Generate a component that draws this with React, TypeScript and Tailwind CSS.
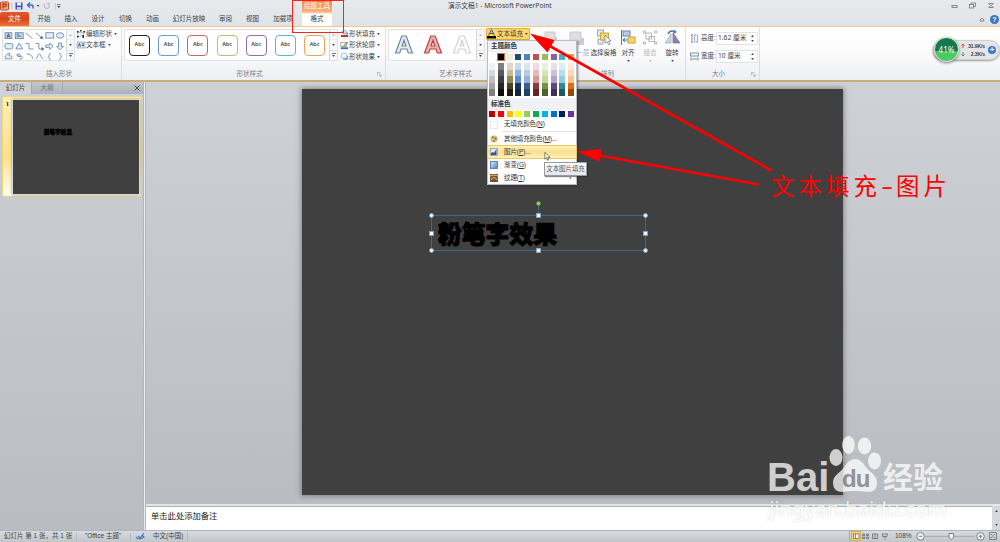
import React from "react";

const Caret = ({ c = "" }: { c?: string }) => (
  <svg viewBox="0 0 4 3" className={"h-[2px] w-[3px] shrink-0 " + c}>
    <path d="M0 0h4L2 3z" fill="#444" />
  </svg>
);

const Tab = ({ t, c }: { t: string; c: string }) => (
  <div className={"flex shrink-0 items-center justify-center pt-px " + c}>{t}</div>
);

const Scroll = () => (
  <div className="flex w-[8px] shrink-0 flex-col border-l border-[#d5d9de] bg-[#f7f8f9]">
    <div className="flex flex-1 items-center justify-center border-b border-[#dfe2e6] opacity-40"><Caret c="rotate-180" /></div>
    <div className="flex flex-1 items-center justify-center border-b border-[#dfe2e6]"><Caret /></div>
    <div className="flex flex-1 flex-col items-center justify-center gap-px"><div className="h-px w-[4px] bg-[#777]" /><Caret /></div>
  </div>
);

const Launcher = () => (
  <svg viewBox="0 0 6 6" className="h-[5px] w-[5px]" fill="none" stroke="#9a9fa6" strokeWidth=".8">
    <path d="M.5 4V.5H4M2 2l3 3M5 2.700V5H2.700" />
  </svg>
);

const Group = ({ w, label, children, launch, end = true }: { w: string; label: string; children: React.ReactNode; launch?: boolean; end?: boolean }) => (
  <div className={"flex h-full shrink-0 flex-col " + w + (end ? " border-r border-[#f3dcae]" : "")}>
    <div className="flex h-[40px]">{children}</div>
    <div className="flex h-[13px] items-center pt-px pr-[3px] text-[#777d85]">
      <span className="flex-1 text-center">{label}</span>
      {launch && <Launcher />}
    </div>
  </div>
);

const shapeStroke = { fill: "none", stroke: "#5c7fa8", strokeWidth: 0.8 };
const Shapes = () => (
  <svg viewBox="0 0 64 31" className="h-[31px] w-[64px]" {...shapeStroke}>
    <g fill="#e3edf8">
      <rect x="2" y="2.500" width="7" height="6" fill="#c5d5e8" />
      <rect x="12.500" y="2.500" width="8" height="6" fill="#c5d5e8" />
      <rect x="43.500" y="2.500" width="8" height="5.500" />
      <ellipse cx="58" cy="5.300" rx="3.800" ry="2.800" />
      <rect x="2" y="13.500" width="8" height="5.500" rx="1.500" />
      <path d="M16.500 13l3.500 6h-7z" />
      <path d="M43.500 15h4v-2l3.500 3.300-3.500 3.300v-2h-4z" />
      <path d="M56.500 13h3v3.500h2l-3.500 3.300-3.500-3.300h2z" />
      <path d="M3 25.500q1-2.500 4-2l-1 2.500q4-.5 3 3H2.500q-1-2 .5-3.500z" />
    </g>
    <path d="M4 7.500l1.500-4L7 7.500M4.500 6h2" stroke="#29415e" />
    <path d="M14 4h2M14 6h4" stroke="#29415e" />
    <path d="M23 2.500l7 6M33.500 2.500l6 5.500M23 13.500h3.500V19H31M33 13.500h3.500V19h4M15 23.500q-2 3 1 3t1-2q-2-1-2 1t4 1q2 1 0 2.500t-1-1M24 24c4 0 6 2 6 5M33 29c3-1 2-5 4-5s1 5 4 5M48.500 23.500c-3 0-.5 3-2.500 3 2 0-.5 3.500 2.500 3.500M57 23.500c3 0 .5 3 2.500 3-2 0 .5 3.500-2.500 3.500" />
    <path d="M40.500 8.500l-3-.5 2-2zM41.500 19l-2-1.500v3z" fill="#38587e" />
  </svg>
);

const styles = ["border-[#222]", "border-[#6d9bd1]", "border-[#cf6262]", "border-[#a9c76b]", "border-[#8b6fb0]", "border-[#5cb8cb]", "border-[#f5a15c]"];

const Glyph = ({ fill, stroke }: { fill: string; stroke: string }) => (
  <svg viewBox="0 0 20 20" className="h-[20px] w-[20px]">
    <path fillRule="evenodd" d="M7.800 1h4.400l6.300 17h-4.200l-1.300-4H7l-1.300 4H1.500zM10 5.300L8.100 11h3.800z" fill={fill} stroke={stroke} strokeWidth="1.200" />
  </svg>
);

const EditIcon = () => (
  <svg viewBox="0 0 10 8" className="h-[8px] w-[10px]"><path d="M1.500 1.500l3 1.500 3.500-1.500-1 4-5 1z" fill="none" stroke="#5f7fa6" strokeWidth=".6" /><path d="M1 1h1.600v1.600H1zM4 0h1.500v1.500H4zM7.500 1H9v1.500H7.500zM1 6h1.500v1.500H1zM6.500 5H8v3H6.500z" fill="#222" /></svg>
);
const TextboxIcon = () => (
  <svg viewBox="0 0 10 8" className="h-[8px] w-[10px]"><rect x="1" y="1" width="8" height="6" fill="#d6e1ef" stroke="#8aa0bb" strokeWidth=".7" /><path d="M2.500 5.500l1-3 1 3M6 3h2M6 4.500h2" fill="none" stroke="#203a5d" strokeWidth=".8" /></svg>
);
const FillIcon = () => (
  <svg viewBox="0 0 10 9" className="h-[9px] w-[9px]"><path d="M1.500 3L5 .5 8 3.500 4.500 5.500z" fill="#dce6f3" stroke="#496998" strokeWidth=".7" /><path d="M8 3l1 2.500H7z" fill="#2c66b6" /><rect x="1" y="6.200" width="8" height="2.300" fill="#c23334" /></svg>
);
const PenIcon = () => (
  <svg viewBox="0 0 10 9" className="h-[9px] w-[9px]"><rect x="1" y="1" width="6.500" height="4.500" fill="#fff" stroke="#777" strokeWidth=".7" /><path d="M8.800.8L4 5" stroke="#c3862e" strokeWidth="1.400" /><rect x="1" y="6.500" width="8" height="2" fill="#386fb8" /></svg>
);
const EffectIcon = () => (
  <svg viewBox="0 0 10 9" className="h-[9px] w-[9px]"><rect x="3" y="3" width="6" height="5.500" rx="2" fill="#7e9dc9" /><rect x="1.500" y="1" width="6" height="5.500" rx="1.500" fill="#f1f6fc" stroke="#88a5cf" strokeWidth=".7" /></svg>
);

const Row = ({ icon, t }: { icon: React.ReactNode; t: string }) => (
  <div className="flex h-[11.500px] items-center">{icon}<span>{t}</span><Caret c="ml-[2px]" /></div>
);

const Big = ({ icon, t, w, dim, caret = true }: { icon: React.ReactNode; t: string; w: string; dim?: boolean; caret?: boolean }) => (
  <div className={"flex shrink-0 flex-col items-center whitespace-nowrap " + w + (dim ? " text-[#b0b3b8]" : "")}>
    <div className="flex h-[19px] items-end">{icon}</div>
    <span className="mt-[2px] leading-[10px]">{t}</span>
    {caret && <Caret c={"mt-[2px]" + (dim ? " opacity-30" : "")} />}
  </div>
);

const SizeRow = ({ t, v, r }: { t: string; v: string; r?: boolean }) => (
  <div className="flex h-[13px] items-center">
    {r ? (
      <svg viewBox="0 0 9 9" className="mr-[2px] h-[9px] w-[9px]" fill="none" stroke="#5e789c" strokeWidth=".8"><rect x=".5" y="1" width="8" height="3" /><path d="M1 5.500v3M8 5.500v3M1.500 7h6" /></svg>
    ) : (
      <svg viewBox="0 0 9 9" className="mr-[2px] h-[9px] w-[9px]" fill="none" stroke="#5e789c" strokeWidth=".8"><path d="M1 .8h2M1 8.200h2M2 1v7" /><rect x="4.500" y="1" width="3" height="7" strokeDasharray="1.500 .6" /></svg>
    )}
    <span className="w-[15px]">{t}</span>
    <div className="flex h-[13px] w-[42px] items-center border border-[#e0e3e7] bg-white pl-px font-['Noto_Sans','Noto_Sans_CJK_SC',sans-serif] text-[6.700px] whitespace-pre">
      <span className="flex-1">{v}</span>
      <span className="mr-[3px] flex flex-col gap-[3px]"><Caret c="rotate-180" /><Caret /></span>
    </div>
  </div>
);

const theme = ["bg-white", "bg-black outline outline-[#e46e38]", "bg-[#eeece1]", "bg-[#1f497d]", "bg-[#4f81bd]", "bg-[#c0504d]", "bg-[#9bbb59]", "bg-[#8064a2]", "bg-[#4bacc6]", "bg-[#f79646]"];
const tints = [
  ["bg-[#f2f2f2]", "bg-[#d8d8d8]", "bg-[#bfbfbf]", "bg-[#a5a5a5]", "bg-[#7f7f7f]"],
  ["bg-[#7f7f7f]", "bg-[#595959]", "bg-[#3f3f3f]", "bg-[#262626]", "bg-[#0c0c0c]"],
  ["bg-[#ddd9c3]", "bg-[#c4bd97]", "bg-[#938953]", "bg-[#494429]", "bg-[#1d1b10]"],
  ["bg-[#c6d9f0]", "bg-[#8db3e2]", "bg-[#548dd4]", "bg-[#17365d]", "bg-[#0f243e]"],
  ["bg-[#dbe5f1]", "bg-[#b8cce4]", "bg-[#95b3d7]", "bg-[#366092]", "bg-[#244061]"],
  ["bg-[#f2dcdb]", "bg-[#e5b9b7]", "bg-[#d99694]", "bg-[#953734]", "bg-[#632423]"],
  ["bg-[#ebf1dd]", "bg-[#d7e3bc]", "bg-[#c3d69b]", "bg-[#76923c]", "bg-[#4f6128]"],
  ["bg-[#e5e0ec]", "bg-[#ccc1d9]", "bg-[#b2a2c7]", "bg-[#5f497a]", "bg-[#3f3151]"],
  ["bg-[#dbeef3]", "bg-[#b7dde8]", "bg-[#92cddc]", "bg-[#31859b]", "bg-[#205867]"],
  ["bg-[#fdeada]", "bg-[#fbd5b5]", "bg-[#fac08f]", "bg-[#e36c09]", "bg-[#974806]"],
];
const standard = ["bg-[#c00000]", "bg-[#ff0000]", "bg-[#ffc000]", "bg-[#ffff00]", "bg-[#92d050]", "bg-[#00b050]", "bg-[#00b0f0]", "bg-[#0070c0]", "bg-[#002060]", "bg-[#7030a0]"];

const MenuItem = ({ t, k, dots = "", icon, c = "", arrow }: { t: string; k: string; dots?: string; icon: React.ReactNode; c?: string; arrow?: boolean }) => (
  <div className={"flex h-[13.200px] shrink-0 items-center " + c}>
    <div className="flex w-[12px] justify-center">{icon}</div>
    <span className="ml-[4px] flex-1 tracking-[-0.1px]">{t}(<u>{k}</u>){dots}</span>
    {arrow && <Caret c="mr-[4px] -rotate-90" />}
  </div>
);

const FillMenu = () => (
  <div className="absolute top-[40px] left-[487px] flex h-[145px] w-[90px] flex-col border border-[#b9bec5] bg-white text-[#333] shadow-[1px_1px_2px_#2228]">
    <div className="flex h-[11px] shrink-0 items-center bg-[#f0f2f5] pl-[3px] font-bold">主题颜色</div>
    <div className="flex h-[9px] shrink-0 items-center gap-[2.800px] pl-px">
      {theme.map((c) => <i key={c} className={"h-[6px] w-[6px] shrink-0 " + c} />)}
    </div>
    <div className="mt-[2px] flex shrink-0 gap-[2.800px] pl-px">
      {tints.map((col, i) => <div key={i} className="flex w-[6px] shrink-0 flex-col">{col.map((c) => <i key={c} className={"h-[6.600px] " + c} />)}</div>)}
    </div>
    <div className="mt-[2px] flex h-[12px] shrink-0 items-center bg-[#f0f2f5] pl-[3px] font-bold">标准色</div>
    <div className="flex h-[8px] shrink-0 items-center gap-[2.800px] pl-px">
      {standard.map((c) => <i key={c} className={"h-[6px] w-[6px] shrink-0 " + c} />)}
    </div>
    <MenuItem t="无填充颜色" k="N" icon={<i className="h-[8px] w-[8px] border border-[#e8e8e8] bg-white" />} />
    <div className="ml-[14px] h-px shrink-0 bg-[#e5e5e5]" />
    <MenuItem t="其他填充颜色" k="M" dots="..." icon={<svg viewBox="0 0 8 8" className="h-[8px] w-[8px]"><circle cx="4" cy="4" r="3.200" fill="#f2cf6c" stroke="#b48b38" strokeWidth=".5" /><circle cx="3" cy="2.500" r=".9" fill="#3b72c0" /><circle cx="5.500" cy="3.500" r=".9" fill="#d33" /><circle cx="4" cy="5.700" r=".9" fill="#3b9147" /></svg>} />
    <MenuItem t="图片" k="P" dots="..." c="-mx-px rounded-[1px] border border-[#ecc766] bg-linear-to-b from-[#fff0b5] via-[#ffe08a] to-[#fff0bd]" icon={<svg viewBox="0 0 8 8" className="h-[8px] w-[8px]"><rect x=".5" y=".5" width="7" height="7" fill="#dce8f6" stroke="#7187a5" strokeWidth=".6" /><path d="M1 7V5l2-1 1 1 2.500-4V7z" fill="#34588e" /></svg>} />
    <MenuItem t="渐变" k="G" icon={<i className="h-[8px] w-[8px] border border-[#6383ae] bg-linear-to-br from-[#d7e7fa] to-[#5684c2]" />} arrow />
    <MenuItem t="纹理" k="T" icon={<svg viewBox="0 0 8 8" className="h-[8px] w-[8px]"><rect width="8" height="8" fill="#77502c" /><path d="M0 2q4-2 8 0M1 6q3-5 6 0" fill="none" stroke="#e8c180" /></svg>} arrow />
  </div>
);

const Handle = ({ c }: { c: string }) => <i className={"absolute h-[5px] w-[5px] border-[0.500px] border-[#80a2bd] bg-[#eefaff] " + c} />;

export default function App() {
  return (
    <div className="relative flex h-[542px] w-[1000px] flex-col overflow-hidden bg-[#c6cacf] font-['Liberation_Sans','Noto_Sans_CJK_SC',sans-serif] text-[6.500px] leading-none whitespace-nowrap text-[#3d4147]">
      <header className="flex h-[26px] shrink-0 bg-linear-to-b from-[#e8eaed] to-[#dfe3e7]">
        <div className="flex w-[302px] shrink-0 flex-col">
          <div className="flex h-[12px] items-center">
            <svg viewBox="0 0 66 12" className="h-[12px] w-[66px]">
              <rect x=".5" y="2" width="8" height="8" rx="1" fill="#f3b294" stroke="#c4461f" />
              <path d="M3 8.500V4h2q1.500 0 1.500 1.300T5 6.600H3" fill="none" stroke="#b93310" strokeWidth="1.300" />
              <path d="M12 3v6M55.500 3v6" stroke="#b5b9bf" strokeWidth=".7" />
              <rect x="15.500" y="2.500" width="7" height="7" fill="#4c53b5" /><rect x="17" y="2.500" width="4" height="3" fill="#f1f4fb" /><rect x="17" y="7" width="4" height="2.500" fill="#cdd3ef" />
              <path d="M28.500 5h3q2 0 1.500 3.500M30 2.500L27.500 5 30 7.500" fill="none" stroke="#3d70c9" strokeWidth="1.500" />
              <path d="M36.500 5h3L38 6.700zM57 6h3.500l-1.700 2z" fill="#444" /><path d="M57 4.500h3.500" stroke="#555" strokeWidth=".8" />
              <path d="M45 4a2.500 2.500 0 1 0 3.500 0M46.500 3.200h2.500v2" fill="none" stroke="#b5b8bc" strokeWidth="1.100" />
            </svg>
          </div>
          <div className="flex h-[14px]">
            <div className="flex w-[29px] items-center justify-center rounded-t-[2px] bg-linear-to-b from-[#e4572e] via-[#d9441b] to-[#f0703a] text-white">文件</div>
            <Tab t="开始" c="w-[30px]" /><Tab t="插入" c="w-[24px]" /><Tab t="设计" c="w-[30px]" /><Tab t="切换" c="w-[25px]" /><Tab t="动画" c="w-[29px]" /><Tab t="幻灯片放映" c="w-[44px]" /><Tab t="审阅" c="w-[29px]" /><Tab t="视图" c="w-[25px]" /><Tab t="加载项" c="w-[36px]" />
          </div>
        </div>
        <div className="flex w-[30px] shrink-0 flex-col items-center bg-linear-to-b from-[#ee8845] from-0% via-[#f7b27c] via-45% to-white to-55%">
          <span className="flex h-[12px] items-center text-white">绘图工具</span>
          <span className="flex h-[14px] items-center pt-px">格式</span>
        </div>
        <div className="flex flex-1 flex-col">
          <div className="flex h-[12px] items-center pl-[116px]">
            <span className="w-[492px] font-['Noto_Sans','Noto_Sans_CJK_SC',sans-serif] text-[6.700px]">演示文稿1 - Microsoft PowerPoint</span>
            <svg viewBox="0 0 60 12" className="h-[12px] w-[60px]" fill="none" stroke="#7c8188" strokeWidth=".9"><rect x="12" y="5.500" width="5" height="2" /><rect x="29.500" y="4.500" width="4" height="3.500" /><path d="M31 4.500V3h4.500v3.500h-2" /><path d="M48.500 3.500h5M48.500 7.500h5M49 3.500l1.500 2-1.500 2M53 3.500l-1.500 2 1.500 2" /></svg>
          </div>
          <div className="flex h-[14px] items-center justify-end gap-[5px] pr-[1px]">
            <svg viewBox="0 0 6 5" className="h-[5px] w-[6px]" fill="none" stroke="#777" strokeWidth=".8"><path d="M1 3l2-2 2 2v1H1z" /></svg>
            <span className="flex h-[9px] w-[9px] items-center justify-center rounded-full bg-[#3b76c4] text-[7px] font-bold text-white">?</span>
          </div>
        </div>
      </header>

      <section className="flex h-[56px] shrink-0 border-t border-b-2 border-t-[#f1c985] border-b-[#c9ad78] bg-linear-to-b from-white via-[#fbfbfc] to-[#eceef1]">
        <Group w="w-[122px]" label="插入形状">
          <div className="mt-[2px] ml-[2px] flex h-[32px] w-[73px] border border-[#dfe3e7] bg-white"><Shapes /><Scroll /></div>
          <div className="mt-px ml-px"><Row icon={<EditIcon />} t="编辑形状" /><Row icon={<TextboxIcon />} t="文本框" /></div>
        </Group>
        <Group w="w-[264px]" label="形状样式" launch>
          <div className="mt-[2px] ml-[2px] flex h-[32px] w-[214px] border border-[#dfe3e7] bg-white">
            <div className="flex flex-1 items-center gap-[8.200px] pl-[4px]">
              {styles.map((c) => <div key={c} className={"flex h-[21px] w-[21px] shrink-0 items-center justify-center rounded-[4px] border-[1.500px] bg-white font-['Open_Sans',sans-serif] text-[5.500px] font-semibold text-[#333] " + c}>Abc</div>)}
            </div>
            <Scroll />
          </div>
          <div className="mt-px ml-[2px]"><Row icon={<FillIcon />} t="形状填充" /><Row icon={<PenIcon />} t="形状轮廓" /><Row icon={<EffectIcon />} t="形状效果" /></div>
        </Group>
        <Group w="w-[147px]" label="艺术字样式" launch end={false}>
          <div className="mt-[2px] ml-[2px] flex h-[32px] w-[97px] border border-[#dfe3e7] bg-white">
            <div className="flex flex-1 items-center gap-[9px] pl-[5px]"><Glyph fill="#eeeade" stroke="#6287b8" /><Glyph fill="#dfb6b5" stroke="#c83e40" /><Glyph fill="#fff" stroke="#d2d2d2" /></div>
            <Scroll />
          </div>
          <div className="mt-px ml-px flex h-[12px] w-[44px] items-center rounded-[1px] border border-[#e5a93c] bg-[#ffd769]">
            <svg viewBox="0 0 9 10" className="mr-px h-[10px] w-[9px]"><path d="M1.500 6.500l3-6 3 6M3 4.500h3" fill="none" stroke="#315a99" /><path d="M0 7h9v2.500H0z" fill="#000" /></svg>
            <span>文本填充</span><Caret c="ml-[2px]" />
          </div>
        </Group>
        <Group w="w-[153px]" label="排列">
          <div className="flex pl-[4px]">
            <Big w="w-[28px]" dim t="上移一层" icon={<svg viewBox="0 0 14 15" className="h-[15px] w-[14px]"><path d="M6 6h7v6H6z" fill="#ccc" /><path d="M1 1h10v9H1z" fill="#e3dde2" stroke="#cbc6cc" /></svg>} />
            <Big w="w-[23px]" dim t="下移一层" icon={<svg viewBox="0 0 16 15" className="h-[15px] w-[16px]"><path d="M7 7h8v7H7z" fill="#ccc" /><path d="M1 1h11v9H1z" fill="#e3dde2" stroke="#cbc6cc" /></svg>} />
            <Big w="w-[31px]" caret={false} t="选择窗格" icon={<svg viewBox="0 0 16 17" className="h-[17px] w-[16px]"><rect x="1.500" y="1" width="6" height="6" fill="#e6eaf0" stroke="#9da8b5" /><rect x="2" y="10" width="5" height="5" fill="#e6eaf0" stroke="#9da8b5" /><rect x="4.500" y="4" width="8" height="7" fill="#f4db70" stroke="#c4a645" /><path d="M9 6l6 6h-2.500l1.500 3-1.500.7-1.500-3L9 14z" fill="#fff" stroke="#577093" strokeWidth=".7" /></svg>} />
            <Big w="w-[18px]" t="对齐" icon={<svg viewBox="0 0 16 17" className="h-[17px] w-[16px]"><path d="M1.500 1v15" stroke="#4b7ab5" /><rect x="3" y="2" width="7" height="5" fill="#b8cce6" stroke="#6889b5" /><path d="M3 11h5M3 11l2-2M3 11l2 2" stroke="#2d68bb" fill="none" /><rect x="8" y="8" width="7" height="6" fill="#f8d75c" stroke="#c4a03d" /></svg>} />
            <Big w="w-[26px]" dim t="组合" icon={<svg viewBox="0 0 16 17" className="h-[17px] w-[16px]" fill="none" stroke="#a5a9af" strokeWidth=".8"><rect x="4" y="4" width="5.500" height="6" /><rect x="7" y="7.500" width="5.500" height="5" /><path d="M1.500 2h2v2h-2zM12.500 2h2v2h-2zM1.500 13h2v2h-2zM12.500 13h2v2h-2z" /></svg>} />
            <Big w="w-[18px]" t="旋转" icon={<svg viewBox="0 0 17 17" className="h-[17px] w-[17px]"><path d="M7 5v9H1z" fill="#cfd7df" stroke="#9caabb" strokeWidth=".7" /><path d="M9 4v10h7z" fill="#8e83b7" stroke="#7267a0" strokeWidth=".7" /><path d="M4 5q2-4 6-2.500" fill="none" stroke="#4878ba" strokeWidth="1.400" /><path d="M9.500 .5l3.500 2.500L9.500 5z" fill="#4878ba" /></svg>} />
          </div>
        </Group>
        <Group w="w-[74px]" label="大小" launch>
          <div className="mt-[5px] ml-[4px] flex flex-col gap-[5px]"><SizeRow t="高度:" v="1.62 厘米" /><SizeRow t="宽度:" v="10 厘米" r /></div>
        </Group>
      </section>

      <main className="flex h-[448px] shrink-0">
        <aside className="flex w-[143px] shrink-0 flex-col bg-linear-to-b from-[#cdd1d6] to-[#b9bcc1]">
          <div className="flex h-[12px] items-center bg-linear-to-b from-[#c3c7cc] to-[#adb2b9]">
            <div className="flex h-full w-[31px] items-center justify-center bg-[#cfd3d8]">幻灯片</div>
            <div className="flex h-full w-[32px] items-center justify-center border-x border-[#a3a8af] text-[#6a7078]">大纲</div>
            <svg viewBox="0 0 6 6" className="mr-[3px] ml-auto h-[6px] w-[6px]"><path d="M.5.5l5 5M5.500.5l-5 5" stroke="#454a51" /></svg>
          </div>
          <div className="mt-[2px] ml-[2px] flex h-[101px] w-[140px] rounded-[2px] border border-[#ecd57d] bg-linear-to-b from-[#fff0b6] via-[#ffe083] via-60% to-[#fffdf0]">
            <span className="w-[9px] pt-[4px] text-center font-['Liberation_Serif'] text-[6px] font-bold text-black">1</span>
            <div className="mt-[2px] flex h-[96px] w-[128px] items-start border border-[#d6d9dd] bg-[#404040] pt-[30px] pl-[31px] font-['Noto_Sans_CJK_SC',sans-serif] text-[5.600px] font-black text-black shadow-[0_0_2px_#777] [-webkit-text-stroke:0.400px_#000]">粉笔字效果</div>
          </div>
        </aside>
        <div className="w-[3px] shrink-0 border-x border-[#b1b5ba] bg-[#eceef0]" />
        <div className="flex flex-1 flex-col">
          <div className="h-[422px] shrink-0 bg-linear-to-b from-[#ced2d7] to-[#b9bcc1] pt-[7px] pl-[156px]">
            <div className="relative h-[406px] w-[541px] bg-[#404040] shadow-[0_0_5px_1px_#5559]">
              <div className="absolute top-[126px] left-[129px] flex h-[36px] w-[215px] items-center border border-[#496583] pl-[6px] font-['Noto_Sans_CJK_SC',sans-serif] text-[23.800px] font-black text-black [-webkit-text-stroke:1px_#000]">
                粉笔字效果
                <i className="absolute top-[-12px] left-[106px] h-[12px] w-px bg-[#496583]" />
                <i className="absolute top-[-15px] left-[104px] h-[5px] w-[5px] rounded-full border-[0.500px] border-[#5c8141] bg-[#91e547]" />
                <Handle c="-top-[3px] -left-[3px] rounded-full" /><Handle c="-top-[3px] left-[104px]" /><Handle c="-top-[3px] -right-[3px] rounded-full" />
                <Handle c="top-[15px] -left-[3px]" /><Handle c="top-[15px] -right-[3px]" />
                <Handle c="-bottom-[3px] -left-[3px] rounded-full" /><Handle c="-bottom-[3px] left-[104px]" /><Handle c="-bottom-[3px] -right-[3px] rounded-full" />
              </div>
            </div>
          </div>
          <div className="flex h-[26px] border-t-2 border-[#e3e6e9] bg-white">
            <div className="flex-1 border-t border-[#aaafb6] pt-[5px] pl-[5px] text-[8.300px] text-[#222]">单击此处添加备注</div>
            <div className="flex w-[8px] flex-col items-center justify-between bg-[#d5d9de] py-[4px]"><Caret c="rotate-180" /><Caret /></div>
          </div>
        </div>
      </main>

      <footer className="flex h-[12px] shrink-0 items-center border-t border-[#aeb4bb] bg-linear-to-b from-[#d8dce0] to-[#c1c6cb] text-[6.500px]">
        <span className="w-[77px] border-r border-[#b3b8be] pl-[4px]">幻灯片 第 1 张，共 1 张</span>
        <span className="w-[54px] border-r border-[#b3b8be] pl-[8px]">"Office 主题"</span>
        <svg viewBox="0 0 10 9" className="ml-[4px] h-[9px] w-[10px]"><path d="M1 5q2 4 8 0L7 3M3 4l2 2 4-5" fill="none" stroke="#4778bd" strokeWidth="1.200" /></svg>
        <span className="ml-[8px] w-[35px] border-r border-[#b3b8be]">中文(中国)</span>
        <div className="ml-auto flex items-center border-l border-[#a8adb4]">
          <svg viewBox="0 0 42 11" className="h-[11px] w-[42px]" fill="none" stroke="#656b73" strokeWidth=".8"><rect x="1.500" y=".5" width="9" height="9" fill="#ffd767" stroke="#d6a23b" /><rect x="3.500" y="3" width="5.500" height="4.500" fill="#fff" /><path d="M5.500 3v4.500M12.500 3h2v1.500h-2zM16.500 3h2v1.500h-2zM12.500 6h2v1.500h-2zM16.500 6h2v1.500h-2zM22.500 3h2.500v4.500h-2.500zM25 3h2.500v4.500H25M32 3h6M32.500 3v2.500h4.500V3M35 5.500v3" /></svg>
          <span className="ml-[3px] w-[19px]">108%</span>
          <svg viewBox="0 0 86 11" className="h-[11px] w-[86px]" fill="none" stroke="#71767e" strokeWidth=".9"><path d="M11 5.300h50" stroke="#9ca1a7" /><circle cx="6.500" cy="5.300" r="3.800" fill="#f2f3f5" /><path d="M4.800 5.300h3.400M35 2.500h4.500v4l-2.200 2-2.300-2z" fill="#f4f5f6" /><circle cx="66.500" cy="5.300" r="3.800" fill="#f2f3f5" /><path d="M64.800 5.300h3.400M66.500 3.600V7M75.500 1.500h7v7h-7zM77 3l1.500 1.500M81 3l-1.500 1.500M77 7l1.500-1.500M81 7l-1.500-1.500" /></svg>
        </div>
      </footer>

      <FillMenu />
      <div className="absolute top-[162px] left-[544px] flex h-[14px] w-[43px] items-center justify-center border border-[#999] bg-linear-to-b from-white to-[#e5e7f0] text-[6.400px] text-[#555] shadow-[1px_1px_1px_#2228]">文本图片填充</div>
      <svg viewBox="0 0 8 11" className="absolute top-[151px] left-[544px] h-[11px] w-[7px]"><path d="M1 .7v8l2-1.800 1.200 3 1.200-.5-1.200-2.900H7z" fill="#fff" stroke="#333" strokeWidth=".7" /></svg>

      <div className="absolute top-[37px] left-[933px] flex h-[26px] w-[67px] items-center">
        <div className="flex h-[20px] w-[67px] items-center rounded-full border border-[#d0d1d3] bg-[#e4e5e6] pl-[27px] shadow-[0_1px_2px_#999]">
          <svg viewBox="0 0 4 14" className="h-[14px] w-[4px]" fill="none" strokeWidth="1"><path d="M2 5V1M.5 2.500L2 1l1.500 1.500" stroke="#df4b32" /><path d="M2 9v4M.5 11.500L2 13l1.500-1.500" stroke="#32a352" /></svg>
          <div className="flex w-[20px] flex-col gap-[3px] text-right text-[5px] font-bold tracking-[-0.1px]"><span>31.9K/s</span><span>2.3K/s</span></div>
          <span className="ml-[3px] flex h-[8px] w-[8px] shrink-0 items-center justify-center rounded-full bg-[#397bd2] text-[8px] font-bold text-white">+</span>
        </div>
        <div className="absolute top-0 left-px flex h-[25px] w-[25px] items-center justify-center rounded-full border-[1.500px] border-[#d5d9d7] bg-linear-to-b from-[#127b4d] from-55% to-[#4aca62] to-60% font-['Noto_Sans',sans-serif] text-[8px] text-white shadow-[0_1px_3px_#777]">41%</div>
      </div>

      <div className="absolute top-0 left-[292px] h-[33px] w-[52px] border border-[#ff2020]" />
      <svg viewBox="0 0 1000 542" className="pointer-events-none absolute top-0 left-0 h-[542px] w-[1000px]">
        <g stroke="#f00" strokeWidth="2.600"><path d="M548 45L771.500 170.500M594 154.500L759 184.500" /></g>
        <path d="M530 33.500L554.500 40L547.500 52.500zM577 151.500L602 149L599.500 162z" fill="#f00" />
      </svg>
      <div className="absolute top-[174px] left-[771px] font-['Noto_Sans_CJK_SC',sans-serif] text-[23.500px] tracking-[4px] text-[#f00]">文本填充<span className="inline-block w-[15px] origin-left scale-x-150 tracking-normal">-</span>图片</div>

      <div className="absolute top-[434px] left-[767px] h-[90px] w-[185px] text-white opacity-75">
        <svg viewBox="0 0 185 60" className="absolute top-0 left-0 h-[60px] w-[185px]" fill="#fff">
          <ellipse cx="69" cy="23.500" rx="6.500" ry="8.500" /><ellipse cx="81.500" cy="11" rx="6.300" ry="9" /><ellipse cx="97.500" cy="12" rx="6.700" ry="8.500" /><ellipse cx="107.500" cy="27" rx="6.500" ry="8.500" />
          <path d="M88 25q6 0 10 7 3 4 7 7 5 4 5 10 0 9-9 9-6-1-13-1-7 0-12 1-10 0-10-9 0-6 5-9.500 4-3 7-7.500 4-7 10-7z" />
        </svg>
        <span className="absolute top-[23px] left-0 text-[40px] font-bold">Bai</span>
        <span className="absolute top-[33px] left-[75px] text-[24px] font-bold tracking-[-1px] text-[#85858a]">du</span>
        <span className="absolute top-[26px] left-[116px] font-['Noto_Sans_CJK_SC',sans-serif] text-[30px] font-bold">经验</span>
        <span className="absolute top-[64px] left-[2px] font-['Noto_Sans',sans-serif] text-[20.500px] [text-shadow:0_0_2px_#8889]">jingyan.baidu.com</span>
      </div>
    </div>
  );
}
